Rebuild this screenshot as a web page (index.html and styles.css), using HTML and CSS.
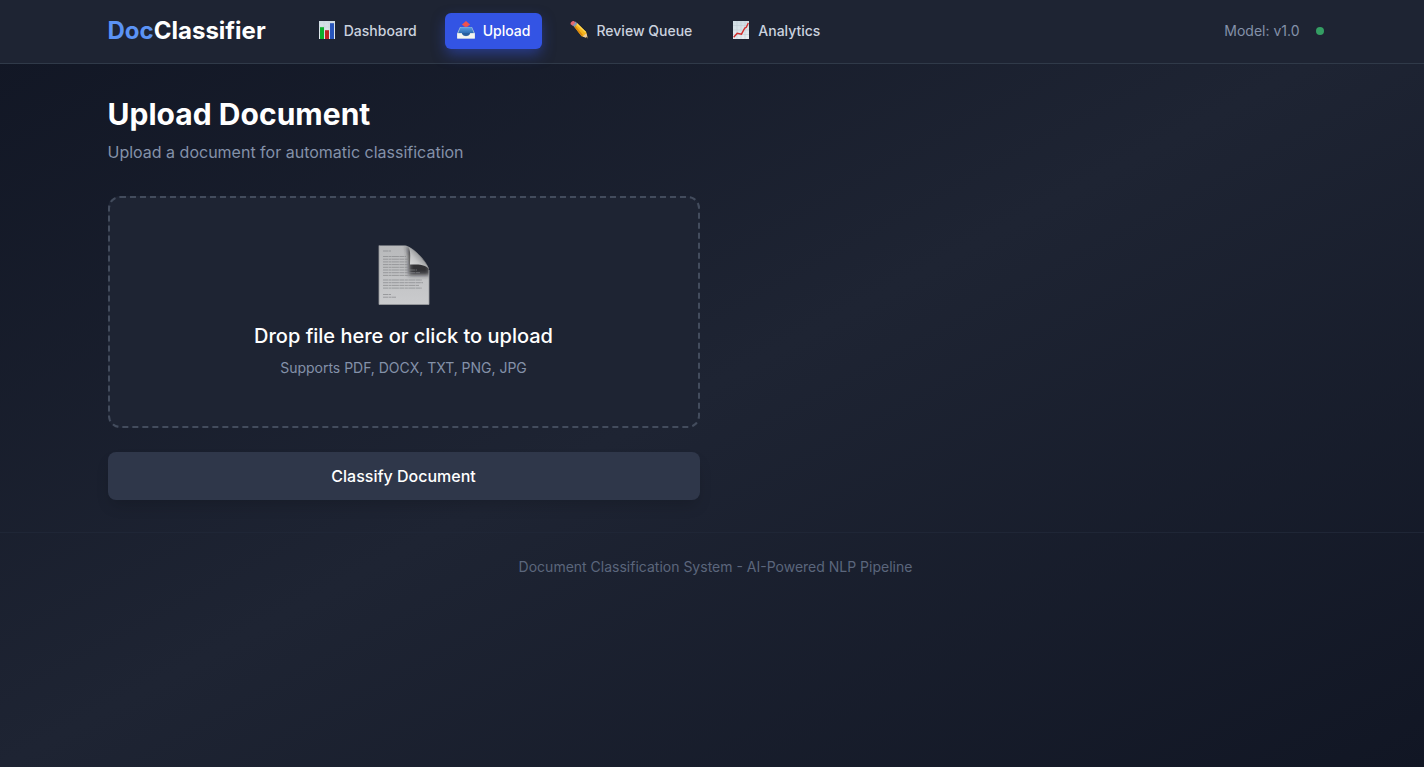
FILE: index.html
```html
<!DOCTYPE html>
<html lang="en">
<head>
<meta charset="utf-8">
<title>DocClassifier</title>
<link rel="stylesheet" href="styles.css">
</head>
<body>
<div class="app">
  <header class="header">
    <div class="container header-row">
      <div class="header-left">
        <a class="brand"><span class="brand-accent">Doc</span>Classifier</a>
        <nav class="nav">
          <a class="nav-link">
            <svg class="nav-icon" viewBox="0 0 18 18">
              <defs><linearGradient id="paper" x1="0" y1="0" x2="0" y2="1"><stop offset="0" stop-color="#d0dce4"/><stop offset="1" stop-color="#e6edf1"/></linearGradient></defs>
              <rect x="1" y="0" width="16" height="18" fill="url(#paper)"/>
              <path d="M1 6h16M1 12h16M6 0v18M11 0v18" stroke="#c3ced7" stroke-width=".4"/>
              <rect x="2" y="6.200" width="4" height="11.800" fill="#0cae2b"/>
              <rect x="7" y="9.200" width="4" height="8.800" fill="#bd2322"/>
              <rect x="12" y="2.200" width="4" height="15.800" fill="#2855bc"/>
            </svg><span>Dashboard</span>
          </a>
          <a class="nav-link active">
            <svg class="nav-icon" viewBox="0 0 18 18">
              <defs><linearGradient id="tray" x1="0" y1="0" x2="0" y2="1"><stop offset="0" stop-color="#5aa0e6"/><stop offset="1" stop-color="#2c6bb2"/></linearGradient></defs>
              <path d="M3 6h12l2.800 6.200v5.200H.2v-5.200z" fill="#a9bfd5"/>
              <path d="M3.500 6.200h11l2.300 6H1.200z" fill="url(#tray)"/>
              <path d="M.2 12.200H5c.4 2 2 3 4 3s3.600-1 4-3h4.800v5.400H.2z" fill="#f4f4ef"/>
              <path d="M4.800 12.100h8.400c-.4 1.900-2 2.900-4.200 2.900s-3.800-1-4.200-2.900z" fill="#285f9f"/>
              <path d="M9 0l4.200 3.800-1.700.6v.8L9 6 6.500 5.200v-.8l-1.700-.6z" fill="#f0524b"/>
            </svg><span>Upload</span>
          </a>
          <a class="nav-link">
            <svg class="nav-icon" viewBox="0 0 18 18">
              <path d="M3.800 5.300L6.700 1.800l9.500 9.300 1.500 6.200-6.100-2.100z" fill="#f5b51e"/>
              <path d="M3.800 5.300l1-1.200 8.200 9.800-1.400 1.300z" fill="#dd8b0e"/>
              <path d="M5.800 2.900l.9-1.100 9.500 9.300-1 .6z" fill="#ffd650"/>
              <path d="M12.800 15.600l3.600-3.300 1.300 5z" fill="#ebcba0"/>
              <path d="M15.700 16.600l1.600-1.200.4 1.900z" fill="#292929"/>
              <path d="M2.200 3.900L5.200.6l2.300 2-3 3.500z" fill="#8297b5"/>
              <path d="M.6 3.300C0 2 2-.3 3.700.1l1.700 1.200-2.800 3.400z" fill="#e46770"/>
            </svg><span>Review Queue</span>
          </a>
          <a class="nav-link">
            <svg class="nav-icon" viewBox="0 0 18 18">
              <rect x="1" y="0" width="16" height="18" fill="url(#paper)"/>
              <path d="M1 4.500h16M1 9h16M1 13.500h16M5 0v18M9 0v18M13 0v18" stroke="#b9c7d1" stroke-width=".45"/>
              <path d="M1.700 16.300l3.500-4 4.300.9 3.300-6.200 1.500-.7L16.300 2" fill="none" stroke="#d12c2b" stroke-width="1.400"/>
            </svg><span>Analytics</span>
          </a>
        </nav>
      </div>
      <div class="status"><span>Model: v1.0</span><span class="dot"></span></div>
    </div>
  </header>
  <main class="container main">
    <h1 class="title">Upload Document</h1>
    <p class="subtitle">Upload a document for automatic classification</p>
    <div class="upload-col">
      <div class="dropzone">
        <svg class="doc-icon" viewBox="0 0 52 60">
          <defs>
            <linearGradient id="page" x1="0" y1="0" x2="0" y2="1"><stop offset="0" stop-color="#b8b9bb"/><stop offset="1" stop-color="#cacbcd"/></linearGradient>
            <linearGradient id="fold" x1="0" y1="1" x2=".75" y2=".25"><stop offset="0" stop-color="#e0e1e2"/><stop offset=".5" stop-color="#c4c5c7"/><stop offset="1" stop-color="#77797c"/></linearGradient>
            <filter id="soft" x="-40%" y="-40%" width="180%" height="180%"><feGaussianBlur stdDeviation="2.300"/></filter>
            <clipPath id="pageClip"><path d="M1 .5H27C34 1 50 17 51 25V59.500H1z"/></clipPath>
          </defs>
          <g clip-path="url(#pageClip)">
            <rect width="52" height="60" fill="url(#page)"/>
            <path d="M27-1Q31 2 31 19V30H52V20z" fill="#292b2e" filter="url(#soft)" opacity=".95"/>
            <path class="doc-lines" d="M5 6h8M5 11.500h23M5 14.200h25M5 16.900h24M5 19.600h25M5 22.300h26M5 25h34M5 27.700h37M5 30.400h33M5 35h39M5 37.700h40M5 40.400h36M5 43.100h39M5 49.500h8M5 52.200h13"/>
          </g>
          <path d="M30.500 2C33 6 32 13 32 19.500c7 0 15-.5 18.800 4.200C48 17 37 5 30.500 2z" fill="url(#fold)"/>
          <path d="M1 .5V59.500H51V25" fill="none" stroke="#9b9da0" stroke-width=".8"/>
        </svg>
        <p class="drop-title">Drop file here or click to upload</p>
        <p class="drop-hint">Supports PDF, DOCX, TXT, PNG, JPG</p>
      </div>
      <button class="classify">Classify Document</button>
    </div>
  </main>
  <footer class="footer">Document Classification System - AI-Powered NLP Pipeline</footer>
</div>
</body>
</html>
```
FILE: styles.css
```css
* { box-sizing: border-box; }
html { overflow: hidden; background: #161a28; }
body { margin: 0; width: 1431px; font-family: Inter, "Liberation Sans", sans-serif; line-height: 1.5; color: #fff; -webkit-font-smoothing: antialiased; }
p, h1 { margin: 0; }
.app { min-height: 767px; background: linear-gradient(to bottom right, #111624, #1e2433 50%, #111624); }
.container { width: 1280px; margin: 0 auto; padding: 0 32px; }
.header { height: 64px; background: #1e2433; border-bottom: 1px solid #303a49; }
.header-row { height: 62px; display: flex; align-items: center; justify-content: space-between; }
.header-left { display: flex; align-items: center; gap: 40px; }
.brand { font-size: 24px; line-height: 32px; font-weight: 700; letter-spacing: 0.01px; }
.brand-accent { color: #5b93f5; }
.nav { display: flex; gap: 16px; }
.nav-link { display: flex; align-items: center; gap: 8px; height: 36px; padding: 0 12px; border-radius: 6px; font-size: 14px; line-height: 20px; font-weight: 500; color: #cbd2df; }
.nav-link.active { background: #3354e4; color: #fff; box-shadow: 0 6px 14px -1px rgba(51, 84, 228, 0.5); }
.nav-icon { width: 18px; height: 18px; position: relative; top: -1px; }
.status { display: flex; align-items: center; gap: 16px; font-size: 14px; line-height: 20px; color: #8491a9; }
.dot { width: 8px; height: 8px; border-radius: 50%; background: #349e63; }
.main { padding-top: 32px; padding-bottom: 32px; }
.title { font-size: 30px; line-height: 36px; font-weight: 700; letter-spacing: 0.03px; }
.subtitle { margin-top: 8px; font-size: 16px; line-height: 24px; color: #8491a9; }
.upload-col { width: 592px; margin-top: 32px; display: flex; flex-direction: column; gap: 24px; }
.dropzone { height: 232px; border: 2px dashed #434c5d; border-radius: 12px; background: #1e2433; display: flex; flex-direction: column; align-items: center; padding-top: 47px; }
.doc-icon { width: 52px; height: 60px; }
.doc-lines { fill: none; stroke: #85878a; stroke-width: 0.7; stroke-dasharray: 5 0.5 3 0.4 7 0.5; }
.drop-title { margin-top: 17px; font-size: 20px; line-height: 28px; font-weight: 500; }
.drop-hint { margin-top: 8px; font-size: 14px; line-height: 20px; letter-spacing: -0.02px; color: #8491a9; }
.classify { height: 48px; border: 0; border-radius: 8px; background: #2f374a; color: #fff; font: 500 16px/24px Inter, sans-serif; box-shadow: 0 8px 15px -3px rgba(0, 0, 0, 0.16); }
.footer { border-top: 1px solid #1f2636; padding-top: 24px; text-align: center; font-size: 14px; line-height: 20px; color: #5b667c; }
```
